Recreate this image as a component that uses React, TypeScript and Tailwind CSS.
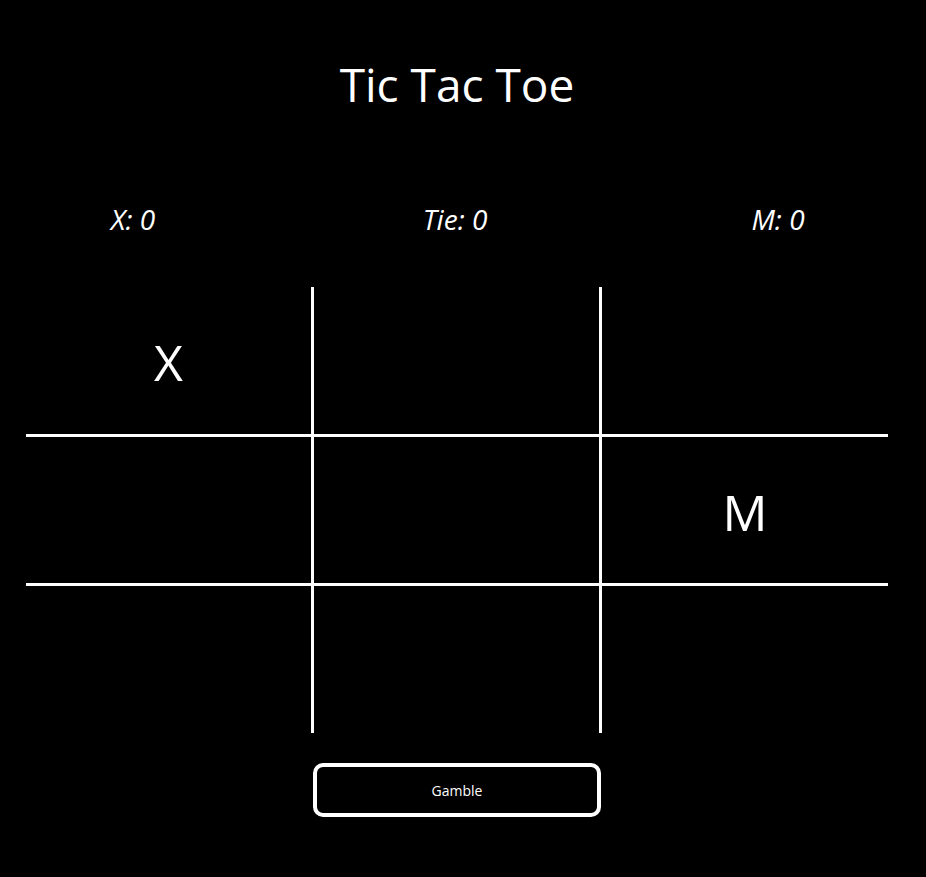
import React from "react";

const cells = ["X", "", "", "", "", "M", "", "", ""];

const cellBorder = [
  "",
  "border-x-[3px] border-white",
  "",
  "border-y-[3px] border-white",
  "border-[3px] border-white",
  "border-y-[3px] border-white",
  "",
  "border-x-[3px] border-white",
  "",
];

export default function App() {
  return (
    <div
      className="bg-black text-white h-[877px] w-full overflow-hidden"
      style={{ fontFamily: '"Open Sans", "Noto Sans", sans-serif' }}
    >
      <h1 className="pt-[48px] pr-[12px] text-center text-[46px] leading-[72px] font-normal">
        Tic Tac Toe
      </h1>
      <div className="mt-[81px] flex italic text-[28px] leading-[36px]">
        <div className="w-[266px] text-center">X: 0</div>
        <div className="w-[378px] text-center">Tie: 0</div>
        <div className="w-[268px] text-center">M: 0</div>
      </div>
      <div className="mt-[50px] ml-[26px] grid grid-cols-[285px_291px_286px] grid-rows-[147px_152px_147px] w-[862px]">
        {cells.map((c, i) => (
          <div
            key={i}
            className={`flex items-center justify-center pt-[4px] text-[50px] ${cellBorder[i]}`}
          >
            {c}
          </div>
        ))}
      </div>
      <div className="mt-[30px] ml-[313px]">
        <button className="w-[288px] h-[54px] rounded-[10px] border-4 border-white bg-black text-white text-[14px]">
          Gamble
        </button>
      </div>
    </div>
  );
}
